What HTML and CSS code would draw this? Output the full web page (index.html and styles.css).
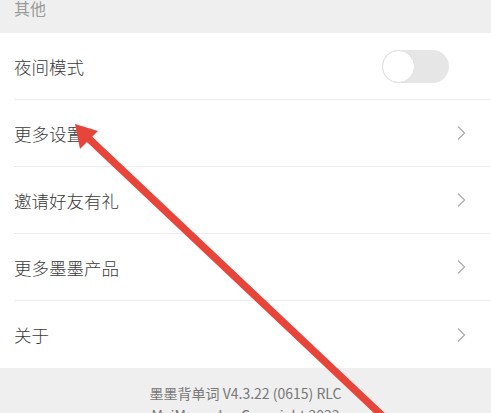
FILE: index.html
```html
<!DOCTYPE html>
<html lang="zh-CN">
<head>
<meta charset="utf-8">
<link rel="stylesheet" href="styles.css">
</head>
<body>
<div class="page">
  <div class="section-title">其他</div>
  <div class="list">
    <div class="row">
      <span class="label">夜间模式</span>
      <span class="switch"><span class="knob"></span></span>
    </div>
    <div class="row">
      <span class="label">更多设置</span>
      <svg class="chev" viewBox="0 0 10 16"><path d="M2 1.5 L8.5 8 L2 14.5" fill="none" stroke="#adadad" stroke-width="1.3"/></svg>
    </div>
    <div class="row">
      <span class="label">邀请好友有礼</span>
      <svg class="chev" viewBox="0 0 10 16"><path d="M2 1.5 L8.5 8 L2 14.5" fill="none" stroke="#adadad" stroke-width="1.3"/></svg>
    </div>
    <div class="row">
      <span class="label">更多墨墨产品</span>
      <svg class="chev" viewBox="0 0 10 16"><path d="M2 1.5 L8.5 8 L2 14.5" fill="none" stroke="#adadad" stroke-width="1.3"/></svg>
    </div>
    <div class="row last">
      <span class="label">关于</span>
      <svg class="chev" viewBox="0 0 10 16"><path d="M2 1.5 L8.5 8 L2 14.5" fill="none" stroke="#adadad" stroke-width="1.3"/></svg>
    </div>
  </div>
  <div class="footer">
    <div>墨墨背单词 V4.3.22 (0615) RLC</div>
    <div>MaiMemo Inc Copyright 2022</div>
  </div>
  <svg class="arrow" viewBox="0 0 491 413" width="491" height="413">
    <line x1="86" y1="136" x2="392" y2="425" stroke="#e8453a" stroke-width="7.5"/>
    <polygon points="75,124 98,131 80,149" fill="#e8453a"/>
  </svg>
</div>
</body>
</html>
```
FILE: styles.css
```css
html, body {
  margin: 0;
  padding: 0;
  background: #efefef;
}
body {
  font-family: "Noto Sans CJK SC", "Noto Sans", sans-serif;
  width: 491px;
  height: 413px;
  overflow: hidden;
}
.page {
  position: relative;
  width: 491px;
  height: 413px;
  overflow: hidden;
}
.section-title {
  box-sizing: border-box;
  padding: 0 14px;
  margin-top: -9px;
  height: 42px;
  line-height: 34px;
  font-size: 16px;
  color: #9a9a9a;
}
.list {
  background: #fff;
}
.row {
  height: 66px;
  margin-left: 14px;
  padding-right: 25px;
  border-bottom: 1px solid #ececec;
  display: flex;
  align-items: center;
  justify-content: space-between;
}
.row.last {
  border-bottom: none;
  height: 67px;
}
.label {
  font-size: 17.5px;
  font-weight: 300;
  color: #3a3a3a;
}
.chev {
  width: 10px;
  height: 16px;
}
.switch {
  width: 67px;
  height: 33px;
  border-radius: 17px;
  background: #e6e6e6;
  margin-right: 17px;
  position: relative;
}
.knob {
  position: absolute;
  left: 0;
  top: 0;
  width: 31px;
  height: 31px;
  border-radius: 50%;
  background: #fff;
  border: 1px solid #e0e0e0;
}
.footer {
  padding-top: 14px;
  text-align: center;
  font-size: 14px;
  line-height: 22px;
  color: #777;
}
.arrow {
  position: absolute;
  left: 0;
  top: 0;
}
```
